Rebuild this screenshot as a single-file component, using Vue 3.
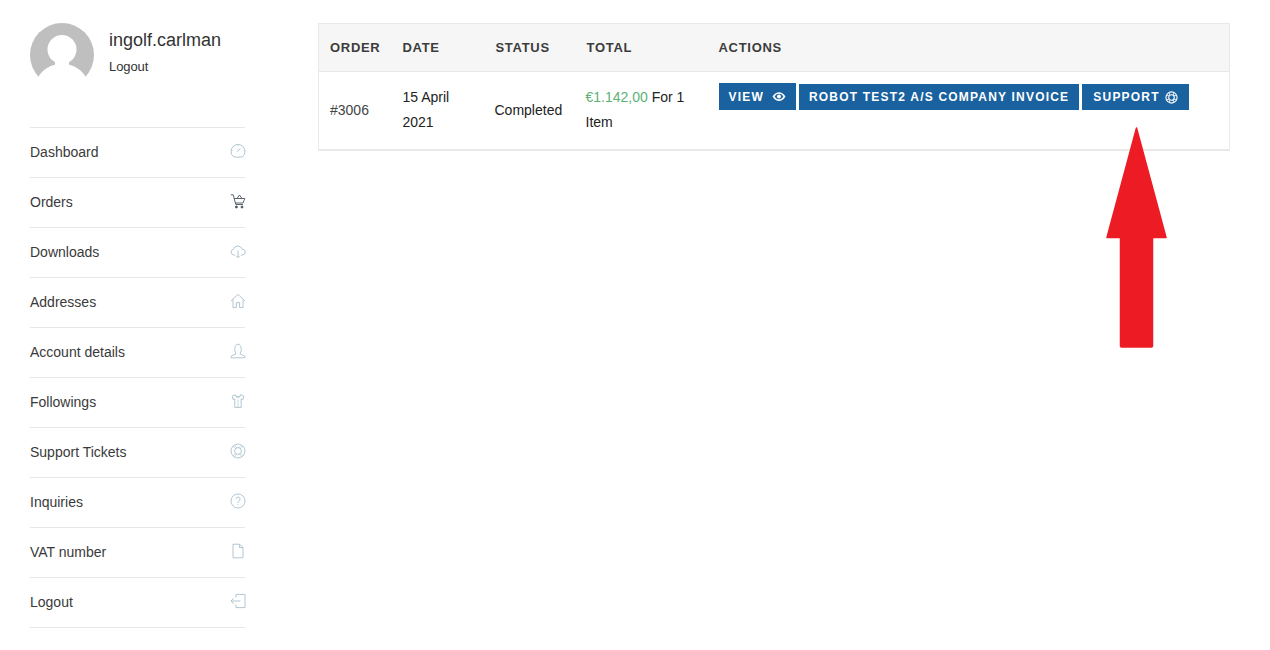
<script setup>
const items = [
  { label: 'Dashboard', icon: 'gauge' },
  { label: 'Orders', icon: 'cart' },
  { label: 'Downloads', icon: 'cloud' },
  { label: 'Addresses', icon: 'home' },
  { label: 'Account details', icon: 'user' },
  { label: 'Followings', icon: 'shirt' },
  { label: 'Support Tickets', icon: 'ring' },
  { label: 'Inquiries', icon: 'help' },
  { label: 'VAT number', icon: 'file' },
  { label: 'Logout', icon: 'exit' }
]
</script>

<template>
  <div class="page">
    <aside class="side">
      <div class="profile">
        <svg class="avatar" viewBox="0 0 64 64" width="64" height="64">
          <circle cx="32" cy="32" r="32" fill="#bfbfbf" />
          <circle cx="32" cy="26.5" r="14.5" fill="#fff" />
          <rect x="25" y="36" width="14" height="8" fill="#fff" />
          <path d="M8 54.5 C12 47 20 41 32 41 C44 41 52 47 56 54.5 L68 58 V66 H-4 V58 Z" fill="#fff" />
        </svg>
        <div class="who">
          <div class="name">ingolf.carlman</div>
          <div class="out">Logout</div>
        </div>
      </div>
      <ul class="menu">
        <li v-for="it in items" :key="it.label" class="item">
          <span>{{ it.label }}</span>
          <svg class="ico" :class="{ dark: it.icon === 'cart' }" viewBox="0 0 16 16" width="16" height="16" fill="none" stroke="currentColor" stroke-width="0.9">
            <template v-if="it.icon === 'gauge'">
              <path d="M3.2 13.6 A7 7 0 1 1 12.8 13.6" /><path d="M3.2 13.6 Q8 15.2 12.8 13.6" /><path d="M7 8.6 L10.6 5.6" />
              <path d="M8 1.2 V2.8 M2.6 7.6 H1.2 M14.8 7.6 H13.4" stroke-width="0.7" />
            </template>
            <template v-else-if="it.icon === 'cart'">
              <path d="M0.8 1.8 H3.2 L5.8 11.5 H13" /><path d="M4 5.5 H14.8 L13 10 H5.2" /><path d="M7 5.5 L9.5 2 L12 5.5" />
              <circle cx="6.4" cy="14" r="1" fill="currentColor" /><circle cx="12" cy="14" r="1" fill="currentColor" />
            </template>
            <template v-else-if="it.icon === 'cloud'">
              <path d="M5 12 H3.6 A2.9 2.9 0 0 1 3.4 6.3 A4.6 4.6 0 0 1 12.2 6.2 A2.9 2.9 0 0 1 12.4 12 H11" /><path d="M8 7.5 V14.5 M6 12.6 L8 14.6 L10 12.6" />
            </template>
            <template v-else-if="it.icon === 'home'">
              <path d="M1 8 L8 1.4 L15 8" /><path d="M3 6.6 V14.6 H6.4 V9.6 H9.6 V14.6 H13 V6.6" />
            </template>
            <template v-else-if="it.icon === 'user'">
              <path d="M5.8 10 C4.2 8 4.2 1.2 8 1.2 C11.8 1.2 11.8 8 10.2 10 V11 L14.8 13 V14.8 H1.2 V13 L5.8 11 Z" />
            </template>
            <template v-else-if="it.icon === 'shirt'">
              <path d="M5.4 1.6 L2.2 3.2 L3 6.4 L4.8 6 V14.4 H11.2 V6 L13 6.4 L13.8 3.2 L10.6 1.6 A2.6 2.2 0 0 1 5.4 1.6 Z" />
              <path d="M5.6 3.4 A2.6 2.2 0 0 0 10.4 3.4 M8 6.5 V14.4" stroke-width="0.6" />
            </template>
            <template v-else-if="it.icon === 'ring'">
              <circle cx="8" cy="8" r="7" /><circle cx="8" cy="8" r="3.4" /><path d="M3 3 L5.6 5.6 M13 3 L10.4 5.6 M3 13 L5.6 10.4 M13 13 L10.4 10.4 M4.6 2 L6.6 4.8 M11.4 2 L9.4 4.8 M4.6 14 L6.6 11.2 M11.4 14 L9.4 11.2" stroke-width="0.6" />
            </template>
            <template v-else-if="it.icon === 'help'">
              <circle cx="8" cy="8" r="7" /><path d="M5.9 6.2 A2.1 2.1 0 1 1 8.6 8.2 C8 8.5 8 9 8 10" /><path d="M8 11.2 V12.2" />
            </template>
            <template v-else-if="it.icon === 'file'">
              <path d="M3 1.2 H9.6 L13 4.6 V14.8 H3 Z" /><path d="M9.6 1.2 V4.6 H13" />
            </template>
            <template v-else>
              <path d="M6 4.6 V1.4 H15 V14.6 H6 V11.4" /><path d="M10.4 8 H1 M3.6 5.4 L1 8 L3.6 10.6" />
            </template>
          </svg>
        </li>
      </ul>
    </aside>

    <main class="main">
      <table class="orders">
        <colgroup>
          <col class="c1" /><col class="c2" /><col class="c3" /><col class="c4" /><col />
        </colgroup>
        <thead>
          <tr><th>ORDER</th><th>DATE</th><th class="nudge">STATUS</th><th class="nudge">TOTAL</th><th>ACTIONS</th></tr>
        </thead>
        <tbody>
          <tr>
            <td class="muted">#3006</td>
            <td>15 April 2021</td>
            <td>Completed</td>
            <td><span class="price">€1.142,00</span> For 1 Item</td>
            <td class="acts">
              <a class="btn first">VIEW
                <svg viewBox="0 0 16 12" width="14" height="11" class="bi">
                  <path d="M0.6 6 C3 2 5.4 1 8 1 C10.6 1 13 2 15.4 6 C13 10 10.6 11 8 11 C5.4 11 3 10 0.6 6 Z M3 6 C4.4 8.4 6 9.2 8 9.2 C10 9.2 11.6 8.4 13 6 C11.6 3.6 10 2.8 8 2.8 C6 2.8 4.4 3.6 3 6 Z" fill="#fff" fill-rule="evenodd" />
                  <circle cx="8" cy="6" r="2.3" fill="#fff" />
                </svg>
              </a>
              <a class="btn">ROBOT TEST2 A/S COMPANY INVOICE</a>
              <a class="btn wide">SUPPORT
                <svg viewBox="0 0 14 14" width="13" height="13" class="bi" fill="none" stroke="#fff">
                  <circle cx="7" cy="7" r="6" stroke-width="1.2" /><circle cx="7" cy="7" r="3" stroke-width="1.2" /><path d="M5 1.6 V4.4 M9 1.6 V4.4 M5 9.6 V12.4 M9 9.6 V12.4 M1.6 5 H4.4 M1.6 9 H4.4 M9.6 5 H12.4 M9.6 9 H12.4" stroke-width="0.9" />
                </svg>
              </a>
            </td>
          </tr>
        </tbody>
      </table>
    </main>

    <svg class="arrow" viewBox="0 0 62 224" width="62" height="224">
      <path d="M30.5 3 L60 112.5 H46.5 V221 Q46.5 222 45.5 222 H15.5 Q14.5 222 14.5 221 V112.5 H1 Z" fill="#ed1c24" stroke="#ed1c24" stroke-width="1.5" stroke-linejoin="round" />
    </svg>
  </div>
</template>

<style scoped>
.page {
  position: relative;
  width: 1270px;
  height: 650px;
  display: flex;
  background: #fff;
  font-family: "Liberation Sans", Arial, sans-serif;
  color: #333;
  overflow: hidden;
}
.side {
  width: 215px;
  margin: 23px 0 0 30px;
  flex: none;
}
.profile {
  display: flex;
  gap: 15px;
  height: 104px;
}
.avatar { display: block; flex: none; }
.name {
  font-size: 18px;
  line-height: 22px;
  margin-top: 6px;
  color: #333;
}
.out {
  font-size: 13px;
  line-height: 16px;
  margin-top: 8px;
  letter-spacing: -0.1px;
  color: #333;
}
.menu {
  list-style: none;
  margin: 0;
  padding: 0;
  border-top: 1px solid #e6e6e6;
}
.item {
  box-sizing: border-box;
  height: 50px;
  padding-bottom: 2px;
  border-bottom: 1px solid #e6e6e6;
  display: flex;
  align-items: center;
  justify-content: space-between;
  font-size: 14px;
  color: #3a3a3a;
}
.ico { color: #a9c0cc; margin: -2px -1px 0 0; }
.ico.dark { color: #4a5560; }
.main {
  margin: 23px 0 0 73px;
  width: 912px;
  flex: none;
}
.orders {
  table-layout: fixed;
  width: 912px;
  border-collapse: collapse;
  border: 1px solid #e9e9e9;
  border-bottom-width: 2px;
  font-size: 14px;
  color: #222;
}
.c1 { width: 73px; }
.c2 { width: 92px; }
.c3 { width: 91px; }
.c4 { width: 133px; }
th {
  height: 47px;
  padding: 0 11px;
  background: #f6f6f6;
  border-bottom: 1px solid #e9e9e9;
  text-align: left;
  font-size: 13px;
  font-weight: 700;
  letter-spacing: 0.7px;
  color: #3c3c3c;
}
th.nudge { padding-left: 12px; }
td {
  box-sizing: border-box;
  height: 78px;
  padding: 0 11px;
  line-height: 25px;
  vertical-align: middle;
}
.muted { color: #444; }
.price { color: #5cb176; }
.acts {
  vertical-align: top;
  padding-top: 11px;
  white-space: nowrap;
  font-size: 0;
  line-height: 0;
}
.btn {
  display: inline-flex;
  align-items: center;
  gap: 8px;
  height: 26px;
  margin-top: 1px;
  padding: 0 10px;
  margin-right: 3px;
  background: #19619f;
  color: #fff;
  font-size: 12px;
  font-weight: 700;
  letter-spacing: 1.2px;
  line-height: 26px;
  vertical-align: top;
}
.btn.first { height: 27px; margin-top: 0; }
.btn.wide { padding: 0 11px; gap: 5px; }
.bi { display: block; flex: none; }
.arrow {
  position: absolute;
  left: 1106px;
  top: 125px;
}
</style>
